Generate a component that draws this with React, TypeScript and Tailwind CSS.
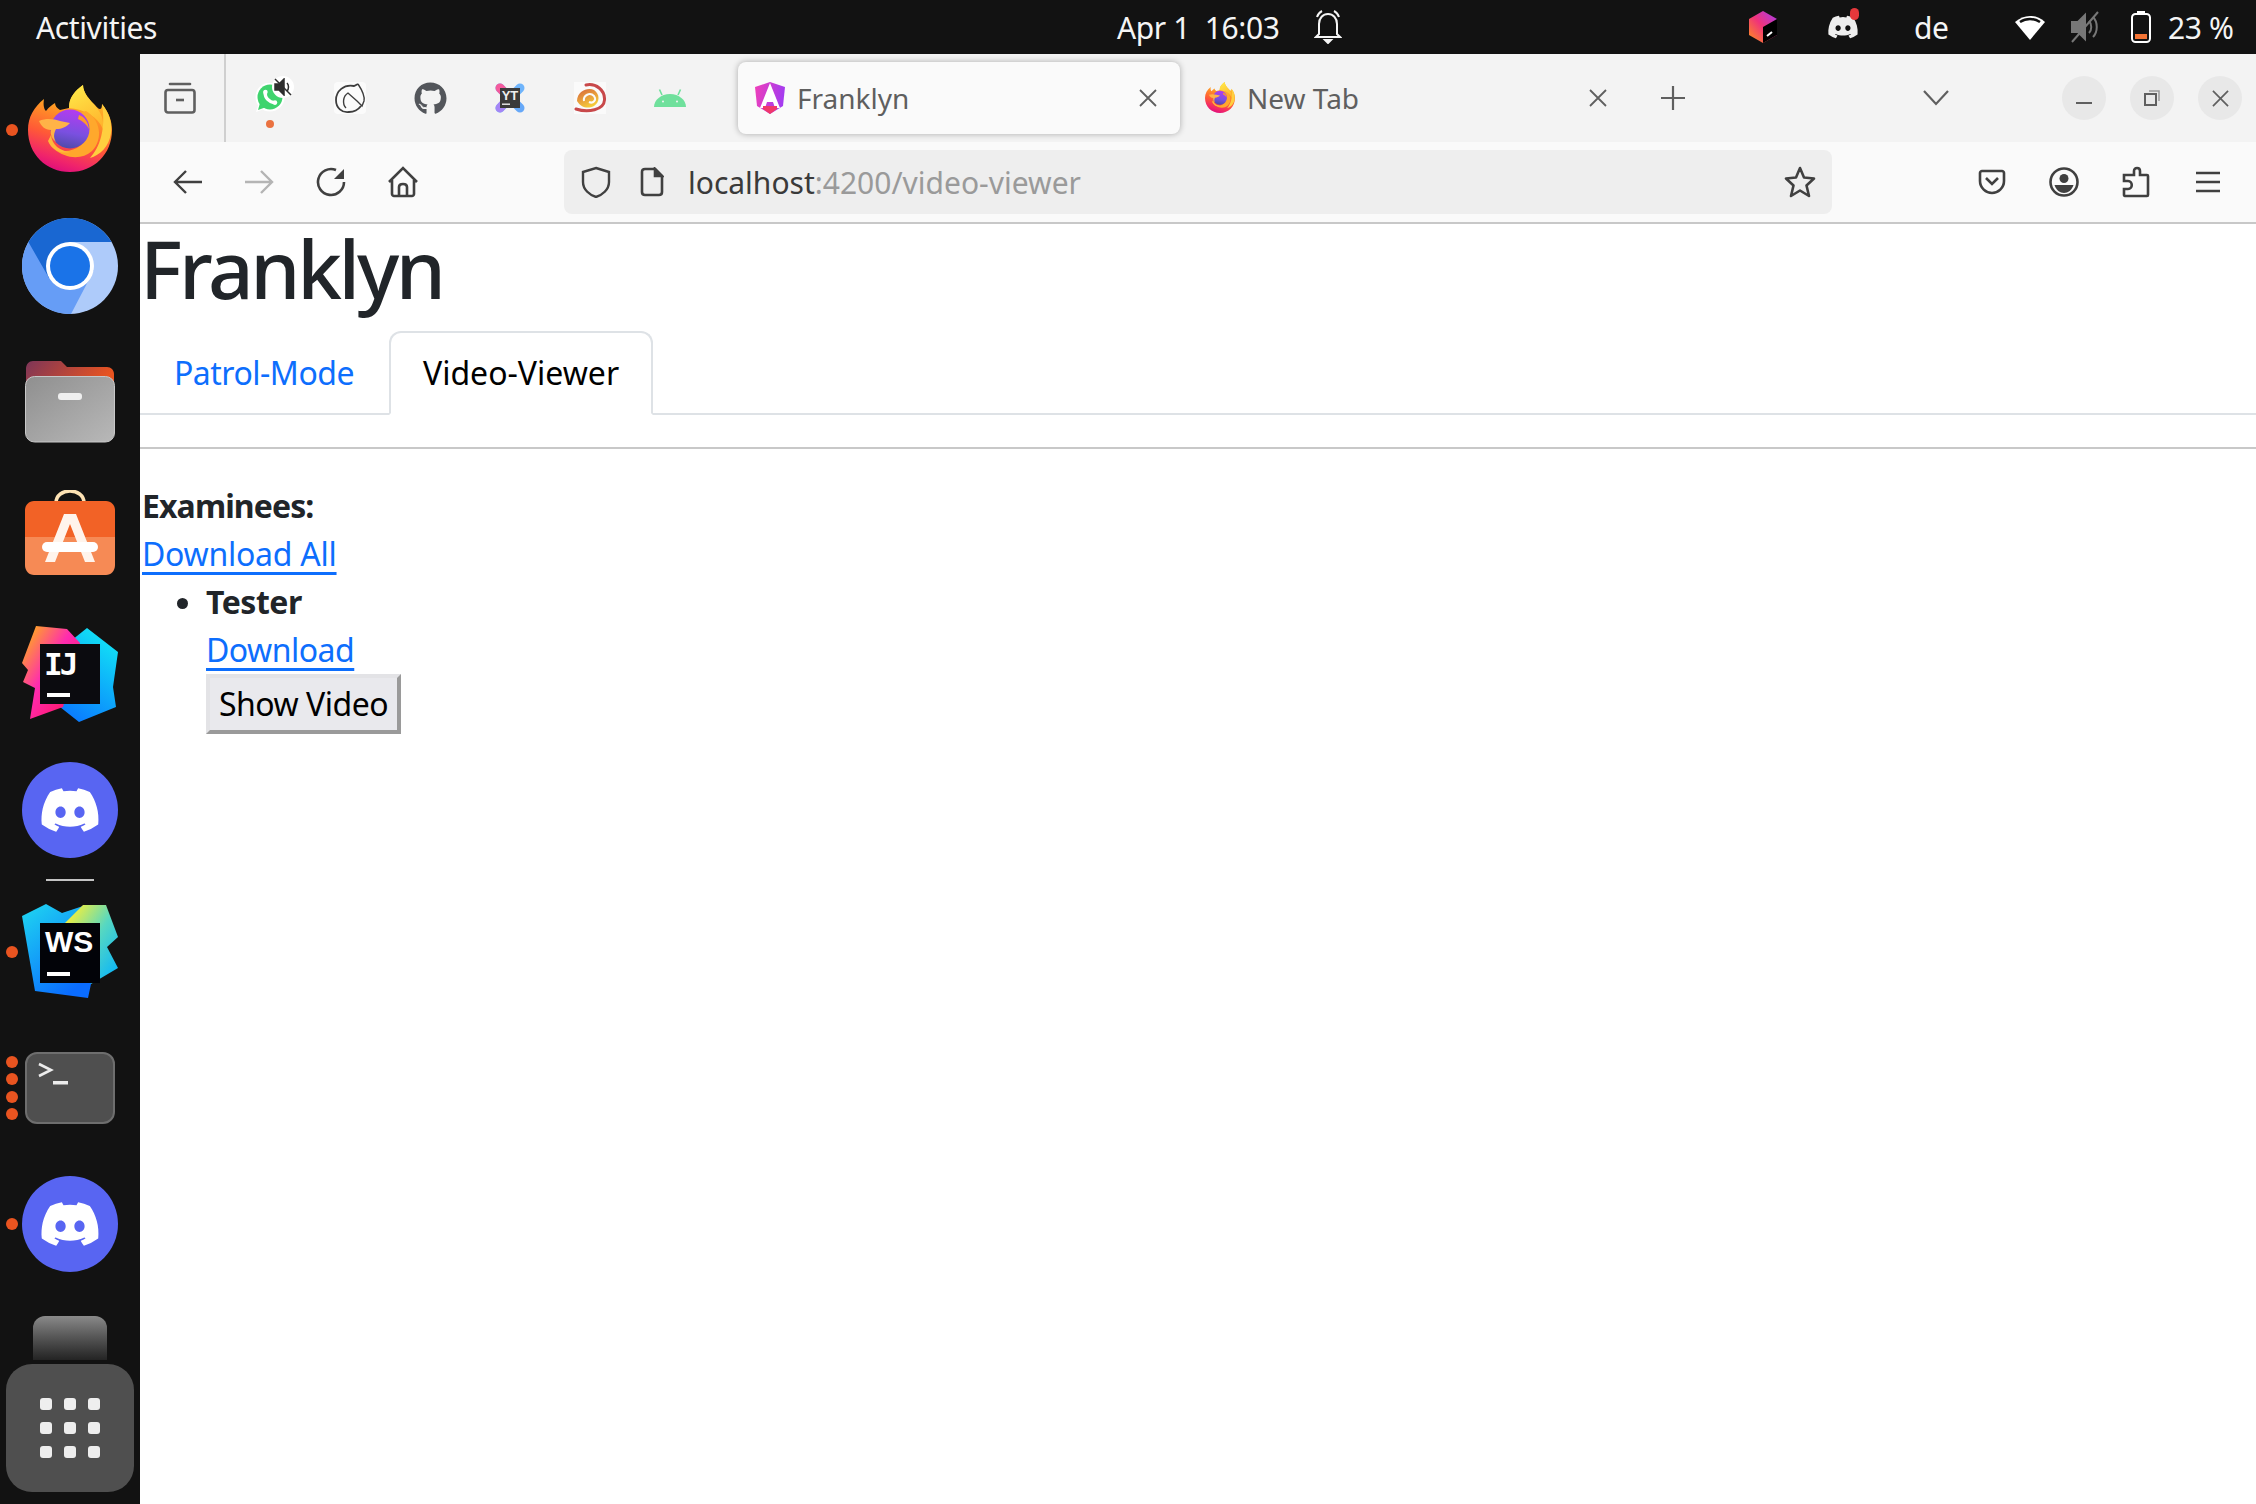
import { FaDiscord, FaGithub } from 'react-icons/fa';

function FirefoxLogo({ size = 84, id = 'ff' }: { size?: number; id?: string }) {
  return (
    <svg width={size} height={(size * 87) / 84} viewBox="0 0 84 87">
      <defs>
        <linearGradient id={`${id}-body`} x1="0.7" y1="0.05" x2="0.4" y2="1">
          <stop offset="0" stopColor="#ffc52e" />
          <stop offset="0.3" stopColor="#ff9a24" />
          <stop offset="0.62" stopColor="#ff5a36" />
          <stop offset="0.88" stopColor="#f0246b" />
          <stop offset="1" stopColor="#e0107a" />
        </linearGradient>
        <linearGradient id={`${id}-globe`} x1="0.6" y1="0" x2="0.4" y2="1">
          <stop offset="0" stopColor="#b43bf0" />
          <stop offset="0.6" stopColor="#7a50e0" />
          <stop offset="1" stopColor="#4f4aa8" />
        </linearGradient>
        <linearGradient id={`${id}-flame`} x1="0.3" y1="0" x2="0.7" y2="1">
          <stop offset="0" stopColor="#ffe847" />
          <stop offset="1" stopColor="#ffb52e" />
        </linearGradient>
      </defs>
      <path
        d="M0 45C0 32 6 22 16 14C15 20 16 24 18 26C21 22 24 20 27 18C27 21 29 23 32 25L41 23C41 12 47 6 55 0C55 8 62 15 67 20C70 24 74 27 74 19C81 28 84 36 84 45C84 69 66 87 42 87C18 87 0 69 0 45Z"
        fill={`url(#${id}-body)`}
      />
      <path d="M41 23C41 12 47 6 55 0C55 8 62 15 68 22C73 28 76 34 75 44C70 32 56 24 41 23Z" fill={`url(#${id}-flame)`} />
      <path d="M74 19C81 28 84 36 83 48C81 62 72 70 62 73C72 62 78 44 74 19Z" fill="#ffcf3f" />
      <path d="M58 26C72 34 76 54 64 66C54 75 38 74 26 64C42 70 58 62 60 46C60 38 58 32 52 28Z" fill="#ffa82c" />
      <path d="M23 50C24 60 32 66 42 67C34 69 24 66 20 56Z" fill="#ffb93a" />
      <circle cx="42" cy="44" r="19.5" fill={`url(#${id}-globe)`} />
      <path d="M11 36C18 33 26 34 32 36L42 38C38 42 34 44 28 44C26 48 25 52 28 57C24 54 22 49 23 45C17 45 13 41 11 36Z" fill="#ffb347" />
      <path d="M51 30C57 32 60 37 61 44C58 39 55 36 50 34Z" fill="#ff9a2a" />
    </svg>
  );
}

function ChromiumLogo() {
  return (
    <svg width="96" height="96" viewBox="0 0 96 96">
      <circle cx="48" cy="48" r="48" fill="#aecbfa" />
      <path d="M6.4 24A48 48 0 0 0 49 96L72 52L48 48Z" fill="#669df6" />
      <path d="M48 24H89.6A48 48 0 0 0 6.4 24L27 60Z" fill="#1967d2" />
      <circle cx="48" cy="48" r="24" fill="#ffffff" />
      <circle cx="48" cy="48" r="20" fill="#1a73e8" />
    </svg>
  );
}

function FilesIcon() {
  return (
    <svg width="90" height="82" viewBox="0 0 90 82">
      <defs>
        <linearGradient id="folder-back" x1="0" y1="0" x2="1" y2="0.3">
          <stop offset="0" stopColor="#7d3558" />
          <stop offset="1" stopColor="#e95420" />
        </linearGradient>
        <linearGradient id="folder-front" x1="0" y1="0" x2="1" y2="1">
          <stop offset="0" stopColor="#8f8f8f" />
          <stop offset="1" stopColor="#b8b8b8" />
        </linearGradient>
      </defs>
      <path d="M1 30V8C1 3 4 0 8 0H36L42 6H82C86 6 89 9 89 13V30Z" fill="url(#folder-back)" />
      <rect x="0.5" y="15.5" width="89" height="65.5" rx="9" fill="url(#folder-front)" stroke="#c8c8c8" />
      <rect x="33" y="32" width="24" height="7" rx="3" fill="#efefef" />
    </svg>
  );
}

function StoreIcon() {
  return (
    <svg width="90" height="85" viewBox="0 0 90 85" className="mb-[12px]">
      <path d="M31 17V13C31 -3 59 -3 59 13V17" fill="none" stroke="#fde2b4" strokeWidth="3.5" strokeLinecap="round" />
      <path d="M9 11H81C86 11 90 15 90 20V47H0V20C0 15 4 11 9 11Z" fill="#f26226" />
      <path d="M0 47H90V75C90 81 86 85 81 85H9C4 85 0 81 0 75Z" fill="#f68a55" />
      <path d="M20 72L39 24H51L70 72H60L45 34L30 72Z" fill="#fff4ec" />
      <rect x="17" y="52" width="56" height="10" rx="5" fill="#ffffff" />
    </svg>
  );
}

function IdeaLogo() {
  return (
    <svg width="96" height="96" viewBox="0 0 96 96">
      <defs>
        <linearGradient id="ij-a" x1="0" y1="0" x2="1" y2="1">
          <stop offset="0" stopColor="#ffc400" />
          <stop offset="0.45" stopColor="#ff2bb0" />
          <stop offset="1" stopColor="#ff1050" />
        </linearGradient>
        <linearGradient id="ij-b" x1="0.8" y1="0" x2="0.3" y2="1">
          <stop offset="0" stopColor="#12e8f5" />
          <stop offset="1" stopColor="#0a78ff" />
        </linearGradient>
      </defs>
      <path d="M65 2L96 26L91 61L94 81L57 96L38 81L30 30Z" fill="url(#ij-b)" />
      <path d="M14 0L45 3L58 17L41 81L8 93L13 62L1 56L6 44L0 37Z" fill="url(#ij-a)" />
      <rect x="18" y="18" width="60" height="60" fill="#0b0b0f" />
      <text x="22" y="49" fontFamily="'DejaVu Sans Mono', monospace" fontWeight="700" fontSize="31" fill="#ffffff" letterSpacing="-3">IJ</text>
      <rect x="25" y="67" width="23" height="4" fill="#ffffff" />
    </svg>
  );
}

function WebstormLogo() {
  return (
    <svg width="96" height="97" viewBox="0 0 96 97">
      <defs>
        <linearGradient id="ws-a" x1="0" y1="0" x2="0.6" y2="1">
          <stop offset="0" stopColor="#1fd8f0" />
          <stop offset="1" stopColor="#0a6cff" />
        </linearGradient>
        <linearGradient id="ws-b" x1="0.2" y1="0" x2="1" y2="0.8">
          <stop offset="0" stopColor="#f5f03a" />
          <stop offset="0.5" stopColor="#58d8c0" />
          <stop offset="1" stopColor="#10b8f5" />
        </linearGradient>
      </defs>
      <path d="M0 12L24 0L40 9L61 2L70 30L69 80L66 94L13 87Z" fill="url(#ws-a)" />
      <path d="M61 1H84L96 33L85 43L96 64L69 80L42 20Z" fill="url(#ws-b)" />
      <rect x="18" y="19" width="60" height="60" fill="#020308" />
      <text x="23" y="48" fontFamily="'Liberation Sans', sans-serif" fontWeight="700" fontSize="30" fill="#ffffff">WS</text>
      <rect x="25" y="68" width="23" height="4" fill="#ffffff" />
    </svg>
  );
}

function TerminalIcon() {
  return (
    <div className="w-[90px] h-[72px] rounded-[12px] bg-[#4f4f4f] border-2 border-[#6e6e6e] flex p-[8px]">
      <svg width="34" height="28" viewBox="0 0 34 28">
        <path d="M4 2L16 8L4 14" fill="none" stroke="#ececec" strokeWidth="2.6" />
        <rect x="18" y="19" width="15" height="3.5" fill="#ececec" />
      </svg>
    </div>
  );
}

function DiscordBadge() {
  return (
    <div className="w-[96px] h-[96px] rounded-full bg-[#5865f2] flex items-center justify-center">
      <FaDiscord className="text-white" size={62} />
    </div>
  );
}

type DockEntry = { key: string; dots: number; icon: React.ReactNode };

const dockTop: DockEntry[] = [
  {
    key: 'firefox',
    dots: 1,
    icon: (
      <span className="flex mb-[3px]">
        <FirefoxLogo />
      </span>
    ),
  },
  { key: 'chromium', dots: 0, icon: <ChromiumLogo /> },
  { key: 'files', dots: 0, icon: <FilesIcon /> },
  { key: 'store', dots: 0, icon: <StoreIcon /> },
  { key: 'idea', dots: 0, icon: <IdeaLogo /> },
  { key: 'discord', dots: 0, icon: <DiscordBadge /> },
];

const dockBottom: DockEntry[] = [
  { key: 'webstorm', dots: 1, icon: <WebstormLogo /> },
  { key: 'terminal', dots: 4, icon: <TerminalIcon /> },
  { key: 'discord2', dots: 1, icon: <DiscordBadge /> },
];

function DockItem({ entry }: { entry: DockEntry }) {
  return (
    <div className="relative h-[136px] flex items-center justify-center">
      {entry.dots > 0 && (
        <div className="absolute left-[6px] top-0 bottom-0 flex flex-col justify-center gap-[5.5px]">
          {Array.from({ length: entry.dots }).map((_, i) => (
            <span key={i} className="block w-[12px] h-[12px] rounded-full bg-[#e95420]" />
          ))}
        </div>
      )}
      {entry.icon}
    </div>
  );
}

function Dock() {
  return (
    <aside className="w-[140px] shrink-0 bg-[#121212] flex flex-col pt-[8px]">
      {dockTop.map((entry) => (
        <DockItem key={entry.key} entry={entry} />
      ))}
      <div className="h-[6px] flex justify-center pt-[1px]">
        <div className="w-[48px] h-[2px] bg-[#c4c4c4]" />
      </div>
      {dockBottom.map((entry) => (
        <DockItem key={entry.key} entry={entry} />
      ))}
      <div className="mx-auto mt-[24px] w-[74px] h-[44px] rounded-t-[12px] bg-gradient-to-b from-[#8a8a8a] to-[#242424]" />
      <div className="mx-auto mt-[4px] w-[128px] h-[128px] rounded-[26px] bg-[#4f4f4f] grid grid-cols-[repeat(3,12px)] gap-[12px] content-center justify-center">
        {Array.from({ length: 9 }).map((_, i) => (
          <span key={i} className="w-[12px] h-[12px] rounded-[3px] bg-[#eeeeee]" />
        ))}
      </div>
    </aside>
  );
}

function TopBar() {
  return (
    <header className="h-[54px] bg-[#121212] text-[#f5f5f5] flex items-center text-[30px] tracking-[-0.4px] font-['Noto_Sans',sans-serif]">
      <span className="ml-[36px] w-[1081px]">Activities</span>
      <span className="w-[192px] whitespace-pre">Apr 1  16:03</span>
      <span className="w-[38px] flex justify-center">
        <svg width="28" height="34" viewBox="0 0 28 34" fill="none" stroke="#f5f5f5" strokeWidth="2">
          <path d="M5 24V14C5 8 9 4 14 4C19 4 23 8 23 14V24L26 27H2Z" />
          <path d="M3 7C4 4 6 2 8 1M25 7C24 4 22 2 20 1" />
          <path d="M11 30H17L14 33Z" fill="#f5f5f5" />
        </svg>
      </span>
      <span className="ml-[402px] w-[28px] flex">
        <svg width="28" height="32" viewBox="0 0 28 32">
          <defs>
            <linearGradient id="tb" x1="0" y1="1" x2="1" y2="0">
              <stop offset="0" stopColor="#ff9419" />
              <stop offset="0.5" stopColor="#f0337a" />
              <stop offset="1" stopColor="#a63cf0" />
            </linearGradient>
          </defs>
          <path d="M14 0L28 8V24L14 32L0 24V8Z" fill="url(#tb)" />
          <path d="M14 16L28 8V24L14 32Z" fill="#000000" />
          <path d="M18 25L23 21" stroke="#ffffff" strokeWidth="2" />
        </svg>
      </span>
      <span className="relative ml-[50px] w-[32px] flex justify-center">
        <FaDiscord size={32} className="text-[#eeeeee]" />
        <span className="absolute right-[0px] top-[-3px] w-[9px] h-[12px] rounded-full bg-[#e5383b]" />
      </span>
      <span className="ml-[55px] w-[32px]">de</span>
      <span className="ml-[68px] w-[32px] flex">
        <svg width="32" height="26" viewBox="0 0 32 26">
          <path d="M1 8C10 0 22 0 31 8L16 26Z" fill="#ffffff" />
          <path d="M6 8C12 4 20 4 26 8" fill="none" stroke="#121212" strokeWidth="2.5" />
        </svg>
      </span>
      <span className="ml-[24px] w-[32px] flex">
        <svg width="30" height="32" viewBox="0 0 30 32" fill="none" stroke="#777777" strokeWidth="2">
          <path d="M2 11H8L15 4V28L8 21H2Z" fill="#777777" />
          <path d="M19 10C22 13 22 19 19 22M23 6C28 11 28 21 23 26" />
          <path d="M2 31L28 1" />
        </svg>
      </span>
      <span className="ml-[29px] w-[22px] flex">
        <svg width="20" height="32" viewBox="0 0 20 32">
          <rect x="6" y="0" width="8" height="3" fill="#ffffff" />
          <rect x="1" y="3" width="18" height="28" rx="3.5" fill="none" stroke="#ffffff" strokeWidth="2" />
          <rect x="4" y="23" width="12" height="5" fill="#f47435" />
        </svg>
      </span>
      <span className="ml-[15px] whitespace-nowrap">23 %</span>
    </header>
  );
}

function PinnedTab({ children }: { children: React.ReactNode }) {
  return <div className="relative w-[80px] h-[88px] flex items-center justify-center">{children}</div>;
}

function CloseGlyph({ color = '#5f5f5f', size = 18 }: { color?: string; size?: number }) {
  return (
    <svg width={size} height={size} viewBox="0 0 18 18" fill="none" stroke={color} strokeWidth="1.8">
      <path d="M1 1L17 17M17 1L1 17" />
    </svg>
  );
}

function TabStrip() {
  return (
    <div className="h-[88px] bg-[#f3f3f3] flex items-center font-['Noto_Sans',sans-serif] text-[#5f5f5f] text-[28px]">
      <div className="w-[86px] h-full border-r-2 border-[#cfcfcf] flex items-center justify-center pr-[4px]">
        <svg width="32" height="32" viewBox="0 0 32 32" fill="none" stroke="#5f5f5f" strokeWidth="2.6">
          <path d="M6 2H26" strokeLinecap="round" />
          <rect x="1.5" y="8" width="29" height="22.5" rx="2.5" />
          <path d="M12 18H20" />
        </svg>
      </div>
      <div className="w-[4px]" />
      <PinnedTab>
        <svg width="30" height="30" viewBox="0 0 30 30">
          <circle cx="15" cy="14" r="14.5" fill="#ffffff" />
          <path d="M1 29L3.5 21L9 26Z" fill="#ffffff" />
          <circle cx="15" cy="14" r="12.5" fill="#3fd46e" />
          <path d="M3 27L5 20L10 24.5Z" fill="#3fd46e" />
          <path d="M10 9C10 15 14 19 20 20" fill="none" stroke="#ffffff" strokeWidth="3.4" strokeLinecap="round" />
          <circle cx="10.5" cy="9" r="2.2" fill="#ffffff" />
          <circle cx="20" cy="19.5" r="2.2" fill="#ffffff" />
        </svg>
        <span className="absolute left-[42px] top-[22px] w-[22px] h-[22px] rounded-full bg-white flex items-center justify-center">
          <svg width="18" height="18" viewBox="0 0 18 18" fill="none" stroke="#2e2e2e" strokeWidth="1.5">
            <path d="M1 6H5L10 1V17L5 12H1Z" fill="#2e2e2e" />
            <path d="M13 5C15 7 15 11 13 13M1 1L17 17" />
          </svg>
        </span>
        <span className="absolute left-[36px] top-[66px] w-[8px] h-[8px] rounded-full bg-[#ea7240]" />
      </PinnedTab>
      <PinnedTab>
        <svg width="32" height="32" viewBox="0 0 32 32">
          <rect width="32" height="32" rx="4" fill="#fbfbfb" />
          <path d="M24 2L20 4C10 2 2 9 2 18C2 26 8 31 15 30C20 30 24 28 27 24" fill="none" stroke="#3d3d3d" strokeWidth="1.8" />
          <path d="M24 2C28 8 31 14 30 19L28 24L23 19L14 11C9 14 8 22 12 26" fill="none" stroke="#3d3d3d" strokeWidth="1.4" />
        </svg>
      </PinnedTab>
      <PinnedTab>
        <FaGithub size={33} className="text-[#53565b]" />
      </PinnedTab>
      <PinnedTab>
        <svg width="30" height="30" viewBox="0 0 30 30">
          <path d="M5 5L25 25" stroke="#66a8f8" strokeWidth="9" strokeLinecap="round" />
          <path d="M5 25L25 5" stroke="#6fb4fb" strokeWidth="9" strokeLinecap="round" />
          <path d="M5 25L14 15" stroke="#a585f5" strokeWidth="9" strokeLinecap="round" />
          <path d="M5 5L14 14" stroke="#f45a9c" strokeWidth="9" strokeLinecap="round" />
          <rect x="5" y="5" width="20" height="20" fill="#3a3a3a" />
          <text x="15" y="17" textAnchor="middle" fontFamily="'Liberation Sans', sans-serif" fontSize="13" fontWeight="700" fill="#eeeeee">YT</text>
          <rect x="7" y="20.5" width="8" height="1.4" fill="#eeeeee" />
        </svg>
      </PinnedTab>
      <PinnedTab>
        <svg width="32" height="32" viewBox="0 0 32 32">
          <defs>
            <linearGradient id="swirl" x1="0.1" y1="0" x2="0.6" y2="1">
              <stop offset="0" stopColor="#d8683c" />
              <stop offset="1" stopColor="#f6cf3a" />
            </linearGradient>
          </defs>
          <rect width="32" height="32" fill="#fafafa" />
          <path d="M12 3C22 1 31 8 30.5 18C30 28 14 31 2 27" fill="none" stroke="#c8484a" strokeWidth="3" strokeLinecap="round" />
          <path d="M3 19C3 9 14 5 20 8C26 12 26 20 20 24C14 27 7 26 3 19Z" fill="url(#swirl)" />
          <path d="M10 19C9 13 16 10 20 14C23 18 19 22 15 20" fill="none" stroke="#fafafa" strokeWidth="2" />
        </svg>
      </PinnedTab>
      <PinnedTab>
        <svg width="32" height="18" viewBox="0 0 32 18">
          <path d="M0 18C0 11 7 5 16 5C25 5 32 11 32 18Z" fill="#6fe09c" />
          <path d="M8 6L5.5 0.5M24 6L26.5 0.5" stroke="#6fe09c" strokeWidth="1.6" />
          <circle cx="9" cy="12.5" r="1" fill="#f3f3f3" />
          <circle cx="23" cy="12.5" r="1" fill="#f3f3f3" />
        </svg>
      </PinnedTab>
      <div className="ml-[28px] w-[442px] h-[72px] rounded-[8px] bg-[#fafafa] shadow-[0_0_6px_rgba(0,0,0,0.3)] flex items-center pl-[17px] pr-[23px]">
        <svg width="30" height="32" viewBox="0 0 30 32" className="mr-[12px]">
          <defs>
            <linearGradient id="ng" x1="0" y1="0" x2="1" y2="0.2">
              <stop offset="0" stopColor="#f13fb8" />
              <stop offset="1" stopColor="#a43cf0" />
            </linearGradient>
          </defs>
          <path d="M15 0L30 5L28 24L15 32L2 24L0 5Z" fill="url(#ng)" />
          <path d="M15 1L25 26H20L18 20H12L10 26H5Z" fill="#ffffff" />
          <path d="M8 24H22V27L15 32L8 27Z" fill="#f0386b" />
        </svg>
        <span className="flex-1">Franklyn</span>
        <CloseGlyph />
      </div>
      <div className="ml-[10px] w-[442px] h-[72px] flex items-center pl-[15px] pr-[25px]">
        <span className="mr-[12px] flex">
          <FirefoxLogo size={30} id="ff-tab" />
        </span>
        <span className="flex-1">New Tab</span>
        <CloseGlyph />
      </div>
      <div className="ml-[20px] w-[42px] flex justify-center">
        <svg width="26" height="26" viewBox="0 0 26 26" stroke="#5f5f5f" strokeWidth="2.2">
          <path d="M13 1V25M1 13H25" />
        </svg>
      </div>
      <div className="ml-[221px] w-[42px] flex justify-center">
        <svg width="26" height="16" viewBox="0 0 26 16" fill="none" stroke="#5f5f5f" strokeWidth="2.2">
          <path d="M1 1L13 14L25 1" />
        </svg>
      </div>
      <div className="ml-[105px] flex gap-[24px]">
        <div className="w-[44px] h-[44px] rounded-full bg-[#e8e8e8] flex items-center justify-center">
          <div className="w-[16px] h-[2px] bg-[#5f5f5f] mt-[10px]" />
        </div>
        <div className="w-[44px] h-[44px] rounded-full bg-[#e8e8e8] flex items-center justify-center">
          <svg width="16" height="16" viewBox="0 0 16 16" fill="none">
            <rect x="1" y="4" width="11" height="11" stroke="#5f5f5f" strokeWidth="2" />
            <path d="M5 1H15V11" stroke="#9a9a9a" strokeWidth="1.5" />
          </svg>
        </div>
        <div className="w-[44px] h-[44px] rounded-full bg-[#e8e8e8] flex items-center justify-center">
          <CloseGlyph size={17} />
        </div>
      </div>
    </div>
  );
}

function NavIcon({ children }: { children: React.ReactNode }) {
  return <div className="w-[72px] flex items-center justify-center">{children}</div>;
}

function NavBar() {
  return (
    <div className="h-[82px] bg-[#fafafa] border-b-2 border-[#c8c8c8] flex items-center pl-[11px] font-['Noto_Sans',sans-serif]">
      <NavIcon>
        <svg width="29" height="24" viewBox="0 0 29 24" fill="none" stroke="#404040" strokeWidth="2.4">
          <path d="M29 12H3M13 1L2 12L13 23" />
        </svg>
      </NavIcon>
      <NavIcon>
        <svg width="29" height="24" viewBox="0 0 29 24" fill="none" stroke="#b4b4b4" strokeWidth="2.4">
          <path d="M0 12H26M16 1L27 12L16 23" />
        </svg>
      </NavIcon>
      <NavIcon>
        <svg width="30" height="30" viewBox="0 0 30 30" fill="none" stroke="#404040" strokeWidth="2.6">
          <path d="M28 15A13 13 0 1 1 20 3" />
          <path d="M28 2V12H18Z" fill="#404040" stroke="none" />
        </svg>
      </NavIcon>
      <NavIcon>
        <svg width="30" height="32" viewBox="0 0 30 32" fill="none" stroke="#404040" strokeWidth="2.6">
          <path d="M1 16L15 2L29 16M4 14V28C4 29 5 30 6 30H24C25 30 26 29 26 28V14" />
          <path d="M11 30V21C11 19 13 18 15 18C17 18 19 19 19 21V30" />
        </svg>
      </NavIcon>
      <div className="ml-[125px] w-[1268px] h-[64px] rounded-[8px] bg-[#eeeeee] flex items-center pl-[16px] pr-[16px] text-[30px]">
        <span className="w-[32px] flex justify-center">
          <svg width="30" height="32" viewBox="0 0 30 32" fill="none" stroke="#404040" strokeWidth="2.4">
            <path d="M15 2L28 6V16C28 24 21 29 15 31C9 29 2 24 2 16V6Z" />
          </svg>
        </span>
        <span className="ml-[24px] w-[32px] flex justify-center">
          <svg width="24" height="30" viewBox="0 0 24 30" fill="none" stroke="#404040" strokeWidth="2.6">
            <path d="M15 2H5C3 2 2 3 2 5V25C2 27 3 28 5 28H19C21 28 22 27 22 25V9Z" />
            <path d="M15 2L22 9H15Z" fill="#404040" />
          </svg>
        </span>
        <span className="ml-[20px] flex-1 text-[#9a9a9a]">
          <span className="text-[#3a3a3a]">localhost</span>:4200/video-viewer
        </span>
        <span className="w-[32px] flex justify-center">
          <svg width="32" height="32" viewBox="0 0 32 32" fill="none" stroke="#404040" strokeWidth="2.6" strokeLinejoin="round">
            <path d="M16 2L20 11.5L30 12.5L22.5 19.5L25 30L16 24.5L7 30L9.5 19.5L2 12.5L12 11.5Z" />
          </svg>
        </span>
      </div>
      <div className="ml-[124px] flex items-center">
        <NavIcon>
          <svg width="28" height="26" viewBox="0 0 28 26" fill="none" stroke="#404040" strokeWidth="2.6">
            <path d="M2 4C2 3 3 2 4 2H24C25 2 26 3 26 4V12C26 19 20 24 14 24C8 24 2 19 2 12Z" />
            <path d="M8 9L14 15L20 9" />
          </svg>
        </NavIcon>
        <NavIcon>
          <svg width="30" height="30" viewBox="0 0 30 30">
            <circle cx="15" cy="15" r="13.5" fill="none" stroke="#404040" strokeWidth="2.6" />
            <circle cx="15" cy="11.5" r="4.5" fill="#404040" />
            <path d="M5.5 18H24.5C23 23 19 26 15 26C11 26 7 23 5.5 18Z" fill="#404040" />
          </svg>
        </NavIcon>
        <NavIcon>
          <svg width="28" height="32" viewBox="0 0 28 32" fill="none" stroke="#404040" strokeWidth="2.6">
            <path d="M12 9V5C12 1 18 1 18 5V9H25C26 9 26 10 26 10V29C26 30 25 30 25 30H4C3 30 2 30 2 29V23H6C11 23 11 15 6 15H2V9Z" />
          </svg>
        </NavIcon>
        <NavIcon>
          <svg width="26" height="24" viewBox="0 0 26 24" stroke="#404040" strokeWidth="2.6">
            <path d="M1 3H25M1 12H25M1 21H25" />
          </svg>
        </NavIcon>
      </div>
    </div>
  );
}

function Page() {
  return (
    <main className="flex-1 bg-white text-[#212529] font-['Noto_Sans',sans-serif] text-[32px] leading-[48px] tracking-[-0.5px]">
      <h1 className="h-[107px] text-[80px] leading-[88px] font-medium tracking-[-3.3px]">Franklyn</h1>
      <ul className="flex border-b-2 border-[#dee2e6] h-[84px]">
        <li className="pl-[34px] pr-[35px] py-[18px] text-[#0d6efd]">Patrol-Mode</li>
        <li className="px-[32px] py-[16px] h-[84px] bg-white text-black tracking-normal border-2 border-[#dee2e6] border-b-white rounded-t-[12px]">Video-Viewer</li>
      </ul>
      <hr className="mt-[32px] border-t-2 border-[#c8c8c8]" />
      <div className="pl-[2px] pt-[33px]">
        <div className="font-bold tracking-[-0.9px]">Examinees:</div>
        <a className="block w-fit text-[#0d6efd] tracking-[-0.25px] underline decoration-[3px] underline-offset-[6px]">Download All</a>
        <ul className="list-disc pl-[64px]">
          <li className="font-bold marker:text-[#212529]">
            Tester
            <a className="block w-fit font-normal text-[#0d6efd] underline decoration-[3px] underline-offset-[6px]">Download</a>
            <button className="block w-[195px] h-[60px] font-normal text-black bg-[#e9e9ed] border-4 border-[#e3e3e6] border-r-[#9a9a9a] border-b-[#9a9a9a]">Show Video</button>
          </li>
        </ul>
      </div>
    </main>
  );
}

export default function App() {
  return (
    <div className="w-[2256px] h-[1504px] overflow-hidden flex flex-col bg-[#121212]">
      <TopBar />
      <div className="flex-1 flex min-h-0">
        <Dock />
        <div className="flex-1 flex flex-col min-w-0">
          <TabStrip />
          <NavBar />
          <Page />
        </div>
      </div>
    </div>
  );
}
